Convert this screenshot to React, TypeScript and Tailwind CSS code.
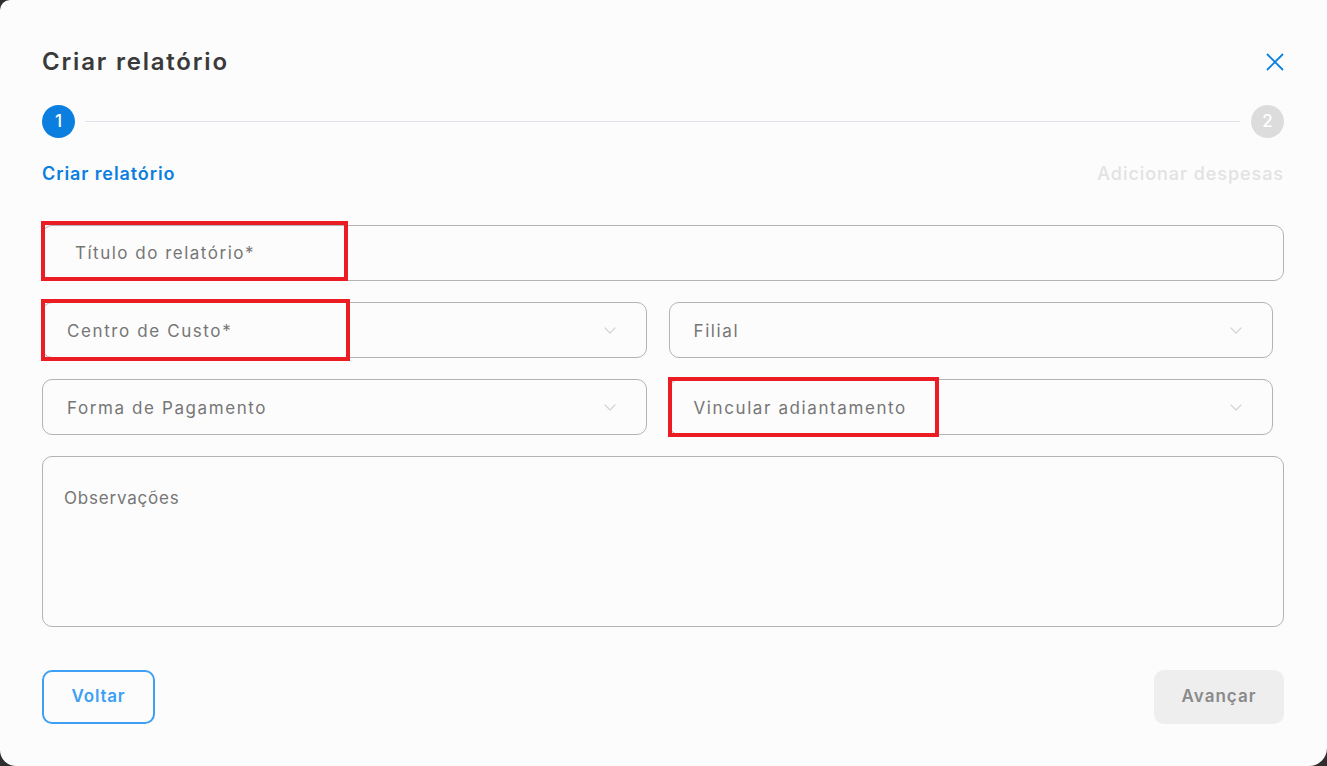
import React from 'react';

const Chevron = () => (
  <svg width="12" height="7" viewBox="0 0 12 7" fill="none" className="shrink-0">
    <path d="M1 1l5 5 5-5" stroke="#d4d4d4" strokeWidth="1.2" strokeLinecap="round" strokeLinejoin="round" />
  </svg>
);

const Select = ({ label, children }: { label: string; children?: React.ReactNode }) => (
  <div className="relative flex-1 h-[56px] rounded-[10px] border border-[#b3b3b3] flex items-center justify-between pl-[24px] pr-[30px]">
    <span className="pt-[3px] text-[17px] tracking-[1.6px] text-[#767676]">{label}</span>
    <Chevron />
    {children}
  </div>
);

const App: React.FC = () => {
  return (
    <div className="w-full h-screen bg-[#2e2e2e] overflow-hidden" style={{ fontFamily: 'Inter, "Noto Sans", sans-serif' }}>
      <div className="w-full h-full bg-[#fcfcfc] rounded-tl-[10px] rounded-bl-[16px] rounded-br-[18px] pl-[42px] pr-[43px] pt-[48px] flex flex-col">
        {/* header */}
        <div className="h-[28px] flex items-center justify-between">
          <h1 className="text-[24px] font-semibold tracking-[1.8px] text-[#3a3a3a]">Criar relatório</h1>
          <svg width="18" height="18" viewBox="0 0 18 18" fill="none">
            <path d="M1 1l16 16M17 1L1 17" stroke="#0b7fe0" strokeWidth="1.8" />
          </svg>
        </div>

        {/* stepper */}
        <div className="mt-[29px] h-[33px] flex items-center">
          <div className="w-[33px] h-[33px] rounded-full bg-[#0b7fe0] text-white flex items-center justify-center text-[17px] font-medium">1</div>
          <div className="flex-1 h-px bg-[#dde2ea] ml-[10px] mr-[11px]" />
          <div className="w-[33px] h-[33px] rounded-full bg-[#dcdcdc] text-white flex items-center justify-center text-[17px] font-medium">2</div>
        </div>
        <div className="mt-[25px] h-[20px] flex items-center justify-between">
          <span className="text-[18px] font-semibold tracking-[0.9px] text-[#0b7fe0]">Criar relatório</span>
          <span className="text-[18px] font-medium tracking-[0.95px] text-[#e2e2e2]">Adicionar despesas</span>
        </div>

        {/* titulo */}
        <div className="relative mt-[42px] h-[56px] rounded-[10px] border border-[#b3b3b3] flex items-center pl-[32px]">
          <span className="pt-[2px] text-[17px] tracking-[1.5px] text-[#767676]">Título do relatório*</span>
          <div className="absolute left-[-2px] top-[-5px] w-[307px] h-[60px] border-[4px] border-[#ec1c24]" />
        </div>

        <div className="mt-[21px] flex gap-[22px] pr-[11px]">
          <Select label="Centro de Custo*">
            <div className="absolute left-[-2px] top-[-4px] w-[309px] h-[62px] border-[4px] border-[#ec1c24]" />
          </Select>
          <Select label="Filial" />
        </div>

        <div className="mt-[21px] flex gap-[22px] pr-[11px]">
          <Select label="Forma de Pagamento" />
          <Select label="Vincular adiantamento">
            <div className="absolute left-[-2px] top-[-3px] w-[271px] h-[60px] border-[4px] border-[#ec1c24]" />
          </Select>
        </div>

        {/* observacoes */}
        <div className="mt-[21px] h-[171px] rounded-[10px] border border-[#b3b3b3] pl-[21px] pt-[29px]">
          <span className="text-[17px] tracking-[0.8px] text-[#767676]">Observações</span>
        </div>

        {/* botoes */}
        <div className="mt-[43px] flex items-center justify-between">
          <button className="w-[113px] h-[54px] rounded-[10px] border-2 border-[#3e9ff5] text-[#3e9ff5] text-[17px] tracking-[0.8px] font-semibold">Voltar</button>
          <button className="w-[130px] h-[54px] rounded-[10px] bg-[#eeeeee] text-[#8a8a8a] text-[17px] tracking-[1px] font-semibold">Avançar</button>
        </div>
      </div>
    </div>
  );
};

export default App;
